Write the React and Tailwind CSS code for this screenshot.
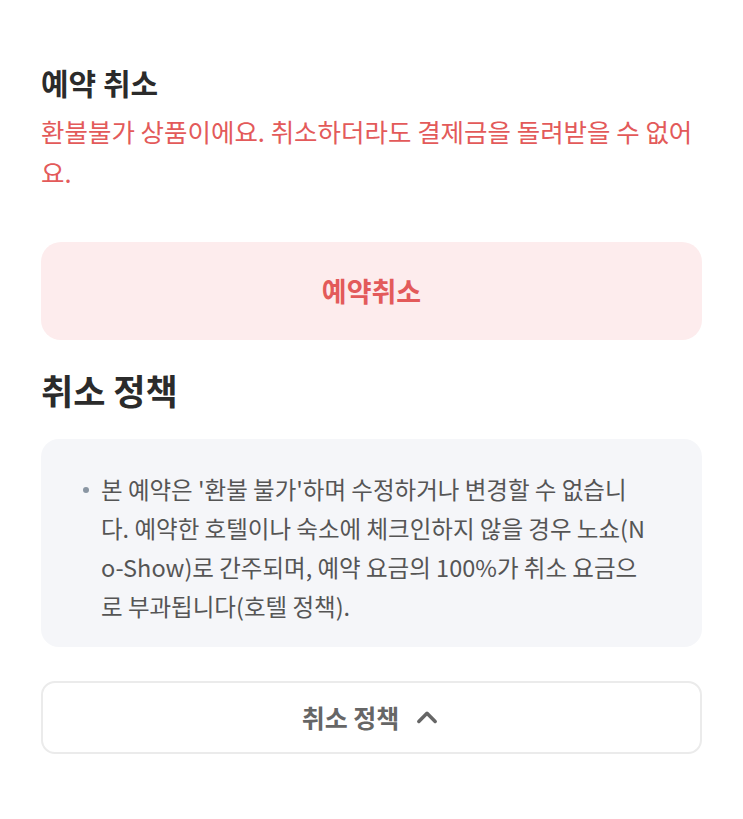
import React from 'react';

const font = { fontFamily: '"Noto Sans CJK KR", "Noto Sans", sans-serif' };

export default function App() {
  return (
    <div className="min-h-screen bg-white px-[41px] pt-[58px]" style={font}>
      <h2 className="text-[30px] font-bold leading-[48px] text-[#2b2b2b]">예약 취소</h2>
      <p className="mt-[4px] text-[25.5px] leading-[41px] text-[#e35a5a] break-all">
        환불불가 상품이에요. 취소하더라도 결제금을 돌려받을 수 없어요.
      </p>

      <button className="mt-[50px] flex h-[98px] w-full items-center justify-center rounded-[20px] bg-[#fdeced] text-[27px] font-bold text-[#e35a5a]">
        예약취소
      </button>

      <h2 className="mt-[25px] text-[35px] font-bold leading-[50px] text-[#2b2b2b]">취소 정책</h2>

      <div className="mt-[24px] rounded-[18px] bg-[#f5f6f9] pl-[42px] pr-[48px] pt-[31px] pb-[21px]">
        <div className="flex items-start gap-[12px]">
          <span className="mt-[17px] h-[6px] w-[6px] shrink-0 rounded-full bg-[#8a96a3]" />
          <p className="text-[23.5px] leading-[39px] text-[#555] break-all">
            본 예약은 '환불 불가'하며 수정하거나 변경할 수 없습니다. 예약한 호텔이나 숙소에 체크인하지 않을 경우 노쇼(No-Show)로 간주되며, 예약 요금의 100%가 취소 요금으로 부과됩니다(호텔 정책).
          </p>
        </div>
      </div>

      <button className="mt-[34px] flex h-[73px] w-full items-center justify-center gap-[14px] rounded-[14px] border-2 border-[#ebebeb] bg-white text-[25px] font-bold text-[#666]">
        취소 정책
        <svg width="28" height="28" viewBox="0 0 24 24" fill="none" stroke="#666" strokeWidth="3" strokeLinecap="round" strokeLinejoin="round">
          <path d="M5 15l7-7 7 7" />
        </svg>
      </button>
    </div>
  );
}
